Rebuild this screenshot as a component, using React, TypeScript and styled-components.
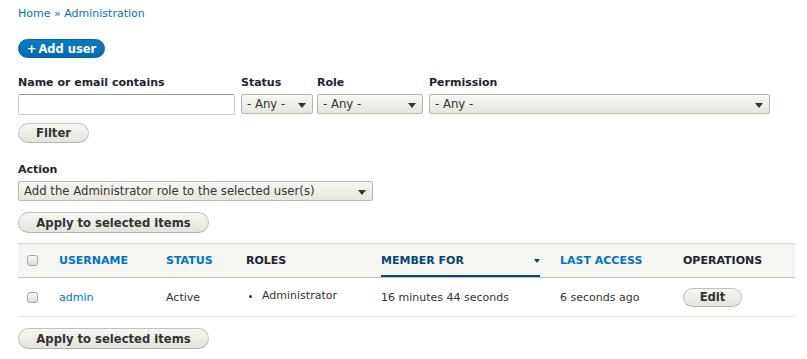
import styled, { createGlobalStyle, css } from 'styled-components';

const GlobalStyle = createGlobalStyle`
  html, body {
    margin: 0;
    padding: 0;
    background: #fff;
  }
  body {
    font-family: "DejaVu Sans", "Liberation Sans", sans-serif;
    font-size: 11px;
    color: #222330;
  }
`;

const Page = styled.div`
  width: 807px;
  height: 359px;
  padding: 0 12px 0 18px;
  box-sizing: border-box;
  overflow: hidden;
`;

const Breadcrumb = styled.nav`
  padding-top: 7px;
  height: 34px;
  box-sizing: border-box;
  font-size: 11px;
  line-height: 14px;
  color: #0074bd;

  a {
    color: #0074bd;
    text-decoration: none;
  }
`;

const ActionLink = styled.a`
  display: inline-flex;
  align-items: center;
  justify-content: center;
  height: 19px;
  border-radius: 10px;
  background: linear-gradient(#0a7cc5, #0069ad);
  border: 1px solid #0063a3;
  color: #fff;
  font-weight: bold;
  font-size: 11.5px;
  white-space: nowrap;
  text-decoration: none;
  box-sizing: border-box;
  width: 87px;
  margin-top: 5px;

  span {
    margin-right: 2px;
  }
`;

const FilterRow = styled.div`
  display: flex;
  margin-top: 17px;
`;

const Field = styled.div<{ $w: number; $gap?: number }>`
  width: ${({ $w }) => $w}px;
  margin-right: ${({ $gap }) => $gap ?? 0}px;
`;

const Label = styled.label`
  display: block;
  font-weight: bold;
  font-size: 11px;
  line-height: 16px;
  margin-bottom: 3px;
  color: #222330;
`;

const TextInput = styled.input`
  display: block;
  width: 100%;
  height: 21px;
  box-sizing: border-box;
  border: 1px solid #ccc;
  border-top-color: #999;
  border-radius: 2px;
  background: #fff;
  padding: 2px 4px;
  font: inherit;
`;

const Select = styled.div<{ $w?: number }>`
  position: relative;
  width: ${({ $w }) => ($w ? `${$w}px` : '100%')};
  height: 20px;
  box-sizing: border-box;
  border: 1px solid #b8b8b0;
  border-radius: 2px;
  background: linear-gradient(#f6f6f3, #e7e7df);
  padding: 0 20px 0 5px;
  line-height: 18px;
  font-size: 11.7px;
  color: #333;
  white-space: nowrap;

  &::after {
    content: '';
    position: absolute;
    right: 6px;
    top: 8px;
    border-left: 4px solid transparent;
    border-right: 4px solid transparent;
    border-top: 5px solid #333;
  }
`;

const Button = styled.button<{ $w: number; $h?: number }>`
  display: block;
  width: ${({ $w }) => $w}px;
  height: ${({ $h }) => $h ?? 21}px;
  box-sizing: border-box;
  border: 1px solid #c2c2bc;
  border-bottom-color: #b4b4ae;
  border-radius: 12px;
  background: linear-gradient(#f6f6f3, #e4e4de);
  font-family: "DejaVu Sans", "Liberation Sans", sans-serif;
  font-weight: bold;
  font-size: 11.6px;
  color: #333;
  padding: 0;
  text-align: center;
`;

const FilterButton = styled(Button)`
  margin-top: 8px;
`;

const ActionSection = styled.div`
  margin-top: 19px;
`;

const ApplyButton = styled(Button)<{ $top: number }>`
  margin-top: ${({ $top }) => $top}px;
`;

const Table = styled.table`
  width: 777px;
  margin-top: 10px;
  border-collapse: collapse;
  table-layout: fixed;
`;

const HeadRow = styled.tr`
  background: #f5f5f2;
  border-top: 1px solid #d6d6d2;
  border-bottom: 1px solid #bfbfba;
`;

const Th = styled.th<{ $link?: boolean; $active?: boolean }>`
  position: relative;
  height: 33px;
  padding: 0 10px;
  text-align: left;
  font-weight: bold;
  font-size: 11px;
  color: ${({ $link }) => ($link ? '#0074bd' : '#222330')};
  ${({ $active }) =>
    $active &&
    css`
      color: #004875;
      &::after {
        content: '';
        position: absolute;
        left: 10px;
        right: 10px;
        bottom: 0;
        height: 2px;
        background: #004875;
      }
    `}
`;

const SortArrow = styled.span`
  position: absolute;
  right: 10px;
  top: 15px;
  border-left: 3px solid transparent;
  border-right: 3px solid transparent;
  border-top: 4px solid #004875;
`;

const BodyRow = styled.tr`
  border-bottom: 1px solid #e6e6e2;
`;

const Td = styled.td`
  height: 38px;
  padding: 0 10px;
  color: #333;
  font-size: 11px;
  vertical-align: middle;

  a {
    color: #0074bd;
    text-decoration: none;
  }
`;

const CheckCell = styled.td`
  padding: 0 0 0 9px;
  vertical-align: middle;
`;

const CheckTh = styled.th`
  padding: 0 0 0 9px;
  height: 33px;
  text-align: left;
`;

const Checkbox = styled.span`
  display: block;
  width: 11px;
  height: 11px;
  box-sizing: border-box;
  border: 1px solid #a6a6a6;
  border-radius: 3px;
  background: linear-gradient(#fafafa, #dcdcdc);
`;

const RoleList = styled.ul`
  margin: -4px 0 0;
  padding: 0 0 0 16px;
  list-style: disc;
`;

const EditButton = styled(Button)`
  width: 59px;
  height: 19px;
`;

const cols = [31, 107, 80, 135, 179, 123, 122];

const App = () => {
  return (
    <Page>
      <GlobalStyle />
      <Breadcrumb>
        <a href="#">Home</a> » <a href="#">Administration</a>
      </Breadcrumb>

      <ActionLink href="#">
        <span>+</span>Add user
      </ActionLink>

      <FilterRow>
        <Field $w={217} $gap={6}>
          <Label>Name or email contains</Label>
          <TextInput />
        </Field>
        <Field $w={72} $gap={4}>
          <Label>Status</Label>
          <Select>- Any -</Select>
        </Field>
        <Field $w={106} $gap={6}>
          <Label>Role</Label>
          <Select>- Any -</Select>
        </Field>
        <Field $w={341}>
          <Label>Permission</Label>
          <Select>- Any -</Select>
        </Field>
      </FilterRow>

      <FilterButton $w={71} $h={20}>Filter</FilterButton>

      <ActionSection>
        <Label>Action</Label>
        <Select $w={355}>Add the Administrator role to the selected user(s)</Select>
      </ActionSection>

      <ApplyButton $w={191} $top={11}>Apply to selected items</ApplyButton>

      <Table>
        <colgroup>
          {cols.map((w, i) => (
            <col key={i} style={{ width: w }} />
          ))}
        </colgroup>
        <thead>
          <HeadRow>
            <CheckTh>
              <Checkbox />
            </CheckTh>
            <Th $link>USERNAME</Th>
            <Th $link>STATUS</Th>
            <Th>ROLES</Th>
            <Th $active>
              MEMBER FOR
              <SortArrow />
            </Th>
            <Th $link>LAST ACCESS</Th>
            <Th>OPERATIONS</Th>
          </HeadRow>
        </thead>
        <tbody>
          <BodyRow>
            <CheckCell>
              <Checkbox />
            </CheckCell>
            <Td>
              <a href="#">admin</a>
            </Td>
            <Td>Active</Td>
            <Td>
              <RoleList>
                <li>Administrator</li>
              </RoleList>
            </Td>
            <Td>16 minutes 44 seconds</Td>
            <Td>6 seconds ago</Td>
            <Td>
              <EditButton $w={59}>Edit</EditButton>
            </Td>
          </BodyRow>
        </tbody>
      </Table>

      <ApplyButton $w={191} $top={11}>Apply to selected items</ApplyButton>
    </Page>
  );
};

export default App;
